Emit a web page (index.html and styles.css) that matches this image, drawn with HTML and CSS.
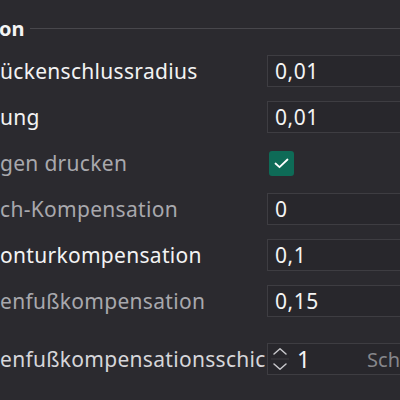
FILE: index.html
```html
<!DOCTYPE html>
<html lang="de">
<head>
<meta charset="utf-8">
<link rel="stylesheet" href="styles.css">
</head>
<body>
<div class="panel">
  <div class="section-head">
    <span class="section-title">on</span>
    <span class="section-rule"></span>
  </div>
  <div class="rows">
    <div class="row">
      <div class="label strong">ückenschlussradius</div>
      <div class="field"><span class="value">0,01</span></div>
    </div>
    <div class="row">
      <div class="label strong">ung</div>
      <div class="field"><span class="value">0,01</span></div>
    </div>
    <div class="row">
      <div class="label muted">gen drucken</div>
      <div class="check-cell">
        <span class="checkbox">
          <svg width="15" height="11" viewBox="0 0 15 11"><path d="M1.5 5.5 L5.5 9.2 L13.5 1.5" fill="none" stroke="#ffffff" stroke-width="1.8" stroke-linecap="round" stroke-linejoin="round"/></svg>
        </span>
      </div>
    </div>
    <div class="row">
      <div class="label muted">ch-Kompensation</div>
      <div class="field"><span class="value">0</span></div>
    </div>
    <div class="row">
      <div class="label strong">onturkompensation</div>
      <div class="field"><span class="value">0,1</span></div>
    </div>
    <div class="row">
      <div class="label muted">enfußkompensation</div>
      <div class="field"><span class="value">0,15</span></div>
    </div>
    <div class="row last">
      <div class="label soft">enfußkompensationsschic</div>
      <div class="field spin">
        <span class="spinner">
          <svg width="18" height="28" viewBox="0 0 18 28"><path d="M3 9 L9 3.8 L15 9" fill="none" stroke="#c8c8cc" stroke-width="1.5" stroke-linecap="round" stroke-linejoin="round"/><path d="M0 14 H18" stroke="#3d3c41" stroke-width="1"/><path d="M3 19 L9 24.2 L15 19" fill="none" stroke="#c8c8cc" stroke-width="1.5" stroke-linecap="round" stroke-linejoin="round"/></svg>
        </span>
        <span class="value">1</span>
        <span class="unit">Sch</span>
      </div>
    </div>
  </div>
</div>
</body>
</html>
```

FILE: styles.css
```css
html, body {
  margin: 0;
  padding: 0;
  background: #2b2a2f;
  overflow: hidden;
}

body {
  width: 400px;
  height: 400px;
  font-family: "Noto Sans", "Liberation Sans", sans-serif;
  color: #f2f2f2;
}

.panel {
  padding-top: 8px;
}

.section-head {
  display: flex;
  align-items: center;
  gap: 5px;
  height: 40px;
}

.section-title {
  font-size: 20px;
  font-weight: 700;
  color: #f4f4f4;
  margin-left: -1px;
}

.section-rule {
  flex: 1;
  height: 1px;
  background: #48474c;
}

.rows {
  display: flex;
  flex-direction: column;
}

.row {
  display: grid;
  grid-template-columns: 267px 133px;
  height: 46px;
  align-items: center;
}

.row.last {
  margin-top: 12px;
}

.label {
  font-size: 21px;
  letter-spacing: 0.3px;
  white-space: nowrap;
  overflow: hidden;
  line-height: 46px;
}

.strong { color: #f3f3f3; }
.muted { color: #a8a8ad; }
.soft { color: #d6d6da; }

.field {
  height: 32px;
  box-sizing: border-box;
  border: 1px solid #3e3d42;
  border-right: none;
  background: #28272c;
  display: flex;
  align-items: center;
  padding-left: 7px;
}

.value {
  font-size: 21px;
  letter-spacing: 0.5px;
  color: #f4f4f4;
}

.check-cell {
  display: flex;
  align-items: center;
  padding-left: 2px;
}

.checkbox {
  width: 25px;
  height: 25px;
  border-radius: 3px;
  background: #0e6b57;
  display: flex;
  align-items: center;
  justify-content: center;
}

.spin {
  padding-left: 3px;
}

.spinner {
  display: flex;
  width: 18px;
  margin-right: 8px;
}

.spin .value {
  flex: 1;
  font-size: 23px;
}

.unit {
  font-size: 20px;
  color: #86868b;
}
```
